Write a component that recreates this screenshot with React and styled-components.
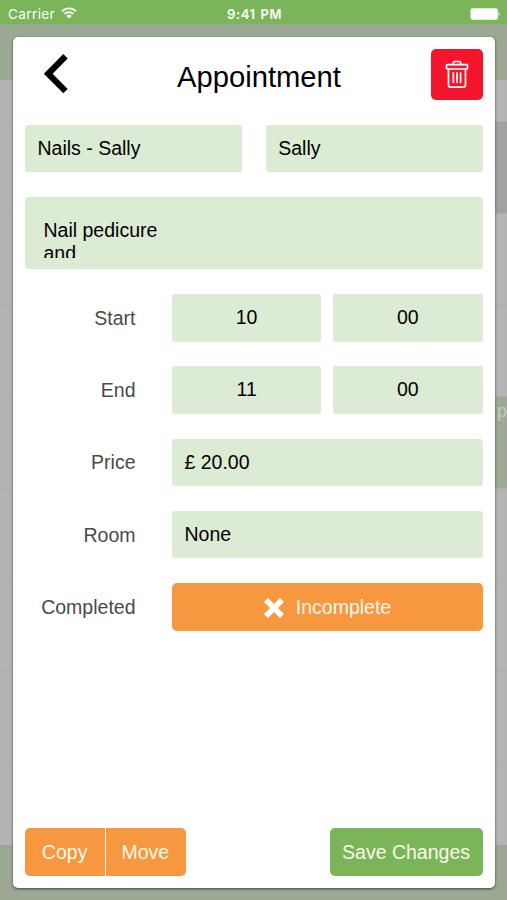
import React from "react";
//Styles
import styled, {createGlobalStyle} from "styled-components";

const GlobalStyle = createGlobalStyle`
    * {
        box-sizing: border-box;
        margin: 0;
        padding: 0;
    }
    body {
        font-family: "Liberation Sans", Arial, sans-serif;
        overflow: hidden;
    }
    button {
        font-family: inherit;
        border: none;
    }
`;

const App = () => {
    return (
        <Screen>
            <GlobalStyle/>
            <StatusBar>
                <Carrier>
                    Carrier
                    <WifiIcon/>
                </Carrier>
                <Time>9:41 PM</Time>
                <BatteryIcon/>
            </StatusBar>
            <Backdrop>
                <Band $height="56px"/>
                <Calendar>
                    <Slot $height="42px"/>
                    <Slot $right="#a1a1a1"/>
                    <Slot/>
                    <Slot/>
                    <Slot $right="#9caa95">p</Slot>
                    <Slot/>
                    <Slot/>
                    <Slot/>
                    <Slot $height="82px" $last/>
                </Calendar>
                <Band $height="54px"/>
            </Backdrop>
            <Modal>
                <Header>
                    <BackButton aria-label="Back">
                        <svg width="26" height="40" viewBox="0 0 26 40">
                            <path d="M22.5 2.2 5.2 19.7l17.3 17.4" fill="none" stroke="#000" strokeWidth="6.2"/>
                        </svg>
                    </BackButton>
                    <h1>Appointment</h1>
                    <DeleteButton aria-label="Delete">
                        <TrashIcon/>
                    </DeleteButton>
                </Header>
                <Form>
                    <Pair $gap="24px">
                        <Field>Nails - Sally</Field>
                        <Field>Sally</Field>
                    </Pair>
                    <Notes>
                        <p>Nail pedicure and</p>
                    </Notes>
                    <Row>
                        <Label>Start</Label>
                        <Pair $gap="12px">
                            <Field $center>10</Field>
                            <Field $center>00</Field>
                        </Pair>
                    </Row>
                    <Row>
                        <Label>End</Label>
                        <Pair $gap="12px">
                            <Field $center>11</Field>
                            <Field $center>00</Field>
                        </Pair>
                    </Row>
                    <Row>
                        <Label>Price</Label>
                        <Field>£ 20.00</Field>
                    </Row>
                    <Row>
                        <Label>Room</Label>
                        <Field>None</Field>
                    </Row>
                    <Row>
                        <Label>Completed</Label>
                        <Button $color="#f79840">
                            <CrossIcon/>
                            Incomplete
                        </Button>
                    </Row>
                </Form>
                <Footer>
                    <ButtonGroup>
                        <Button $color="#f79840">Copy</Button>
                        <Button $color="#f79840">Move</Button>
                    </ButtonGroup>
                    <Button $color="#7ab55a">Save Changes</Button>
                </Footer>
            </Modal>
        </Screen>
    )
}

//Icons
const WifiIcon = () => (
    <svg width="16" height="12" viewBox="0 0 16 12">
        <g fill="none" stroke="#fff" strokeWidth="1.8">
            <path d="M1 4.3a9.9 9.9 0 0 1 14 0"/>
            <path d="M3.5 6.9a6.4 6.4 0 0 1 9 0"/>
        </g>
        <path d="M8 11.6 5.3 8.9a3.8 3.8 0 0 1 5.4 0z" fill="#fff"/>
    </svg>
)

const BatteryIcon = () => (
    <svg width="31" height="12" viewBox="0 0 31 12">
        <rect x="0.5" y="0.3" width="27.3" height="11.4" rx="2" fill="#fff"/>
        <path d="M28.6 4c1.4.5 1.4 3.5 0 4z" fill="#fff"/>
    </svg>
)

const TrashIcon = () => (
    <svg width="24" height="30" viewBox="0 0 24 30" fill="none" stroke="#fff" strokeWidth="1.7" strokeLinejoin="round" strokeLinecap="round">
        <path d="M8.3 5.500V3.800q0-1.300 1.300-1.300h4.800q1.300 0 1.300 1.300v1.700"/>
        <rect x="1.500" y="5.700" width="21" height="4.300" rx="0.8"/>
        <path d="M3.500 10v16q0 2.200 2.200 2.200h12.600q2.200 0 2.200-2.200V10"/>
        <path d="M8.400 13.800v9.500M12 13.800v9.500M15.600 13.800v9.500"/>
    </svg>
)

const CrossIcon = () => (
    <svg width="22" height="20" viewBox="0 0 22 20">
        <path d="M5 4 17 16M17 4 5 16" stroke="#fff" strokeWidth="5.6" strokeLinecap="square" strokeLinejoin="round"/>
    </svg>
)

const Screen = styled.div`
    position: relative;
    display: flex;
    flex-direction: column;
    width: 507px;
    height: 900px;
    overflow: hidden;
`;

const StatusBar = styled.div`
    display: grid;
    grid-template-columns: 1fr auto 1fr;
    align-items: center;
    height: 24px;
    padding: 3px 6px 0 8px;
    background: #7ab55a;
    color: #fff;
    font-family: Inter, sans-serif;
    > svg {
        justify-self: end;
    }
`;

const Carrier = styled.div`
    display: flex;
    align-items: center;
    gap: 6px;
    font-size: 13.5px;
    letter-spacing: 0.4px;
    svg {
        margin-top: -2px;
    }
`;

const Time = styled.span`
    font-size: 13px;
    font-weight: 600;
    letter-spacing: 0.6px;
    word-spacing: 1px;
`;

//Dimmed diary behind the modal
const Backdrop = styled.div`
    display: flex;
    flex-direction: column;
`;

const Band = styled.div`
    height: ${({$height}) => $height};
    background: #9ba994;
`;

const Calendar = styled.div`
    height: 766px;
    background: #b4b4b4;
    border-bottom: 1px solid #a3a3a3;
`;

const Slot = styled.div`
    height: ${({$height}) => $height || "91.7px"};
    padding: 4px 0 0 497px;
    border-bottom: ${({$last}) => $last ? "none" : "1px solid #adadad"};
    background: linear-gradient(${({$right}) => $right || "transparent"}, ${({$right}) => $right || "transparent"}) right / 40px 100% no-repeat;
    color: #c5ccc1;
    font-size: 18px;
    overflow: hidden;
`;

const Modal = styled.div`
    position: absolute;
    top: 37px;
    left: 13px;
    display: flex;
    flex-direction: column;
    width: 481.5px;
    height: 850.5px;
    padding: 11.5px 12px 12px;
    border-radius: 5px;
    background: #fff;
    box-shadow: 0 1px 3px rgba(0, 0, 0, 0.6);
`;

const Header = styled.div`
    display: grid;
    grid-template-columns: 52px 1fr 51.5px;
    align-items: center;
    h1 {
        padding: 5px 0 0 10px;
        font-size: 29.2px;
        font-weight: 400;
        line-height: 34px;
        text-align: center;
    }
`;

const BackButton = styled.button`
    display: flex;
    padding-left: 18px;
    background: none;
`;

const DeleteButton = styled.button`
    display: flex;
    align-items: center;
    justify-content: center;
    height: 51.5px;
    border-radius: 5px;
    background: #f3152c;
`;

const Form = styled.div`
    display: flex;
    flex-direction: column;
    gap: 24.8px;
    margin-top: 24.5px;
`;

const Pair = styled.div`
    display: grid;
    grid-template-columns: 1fr 1fr;
    gap: ${({$gap}) => $gap};
`;

const Row = styled.div`
    display: grid;
    grid-template-columns: 110.5px 1fr;
    align-items: center;
    column-gap: 36.5px;
`;

const Label = styled.label`
    padding-top: 1px;
    color: #4a4a4a;
    font-size: 19.5px;
    text-align: right;
`;

const Field = styled.div`
    height: 47.5px;
    padding: 0 12.5px;
    border-radius: 3px;
    background: #dbebd4;
    font-size: 19.5px;
    line-height: 47px;
    text-align: ${({$center}) => $center ? "center" : "left"};
`;

const Notes = styled.div`
    height: 72.5px;
    padding: 22px 18.5px 11px;
    border-radius: 3px;
    background: #dbebd4;
    font-size: 19.5px;
    line-height: 23px;
    p {
        width: 130px;
        height: 39px;
        overflow: hidden;
    }
`;

const Button = styled.button`
    display: flex;
    align-items: center;
    justify-content: center;
    gap: 11px;
    height: 47.5px;
    padding: 1px 12.5px 0 12px;
    border-radius: 5px;
    background: ${({$color}) => $color};
    color: #fff8e8;
    font-size: 19.5px;
`;

const ButtonGroup = styled.div`
    display: grid;
    grid-template-columns: 1fr 1fr;
    gap: 1px;
    width: 160.5px;
    border-radius: 5px;
    overflow: hidden;
    ${Button} {
        border-radius: 0;
    }
`;

const Footer = styled.div`
    display: flex;
    justify-content: space-between;
    margin-top: auto;
`;

export default App;
